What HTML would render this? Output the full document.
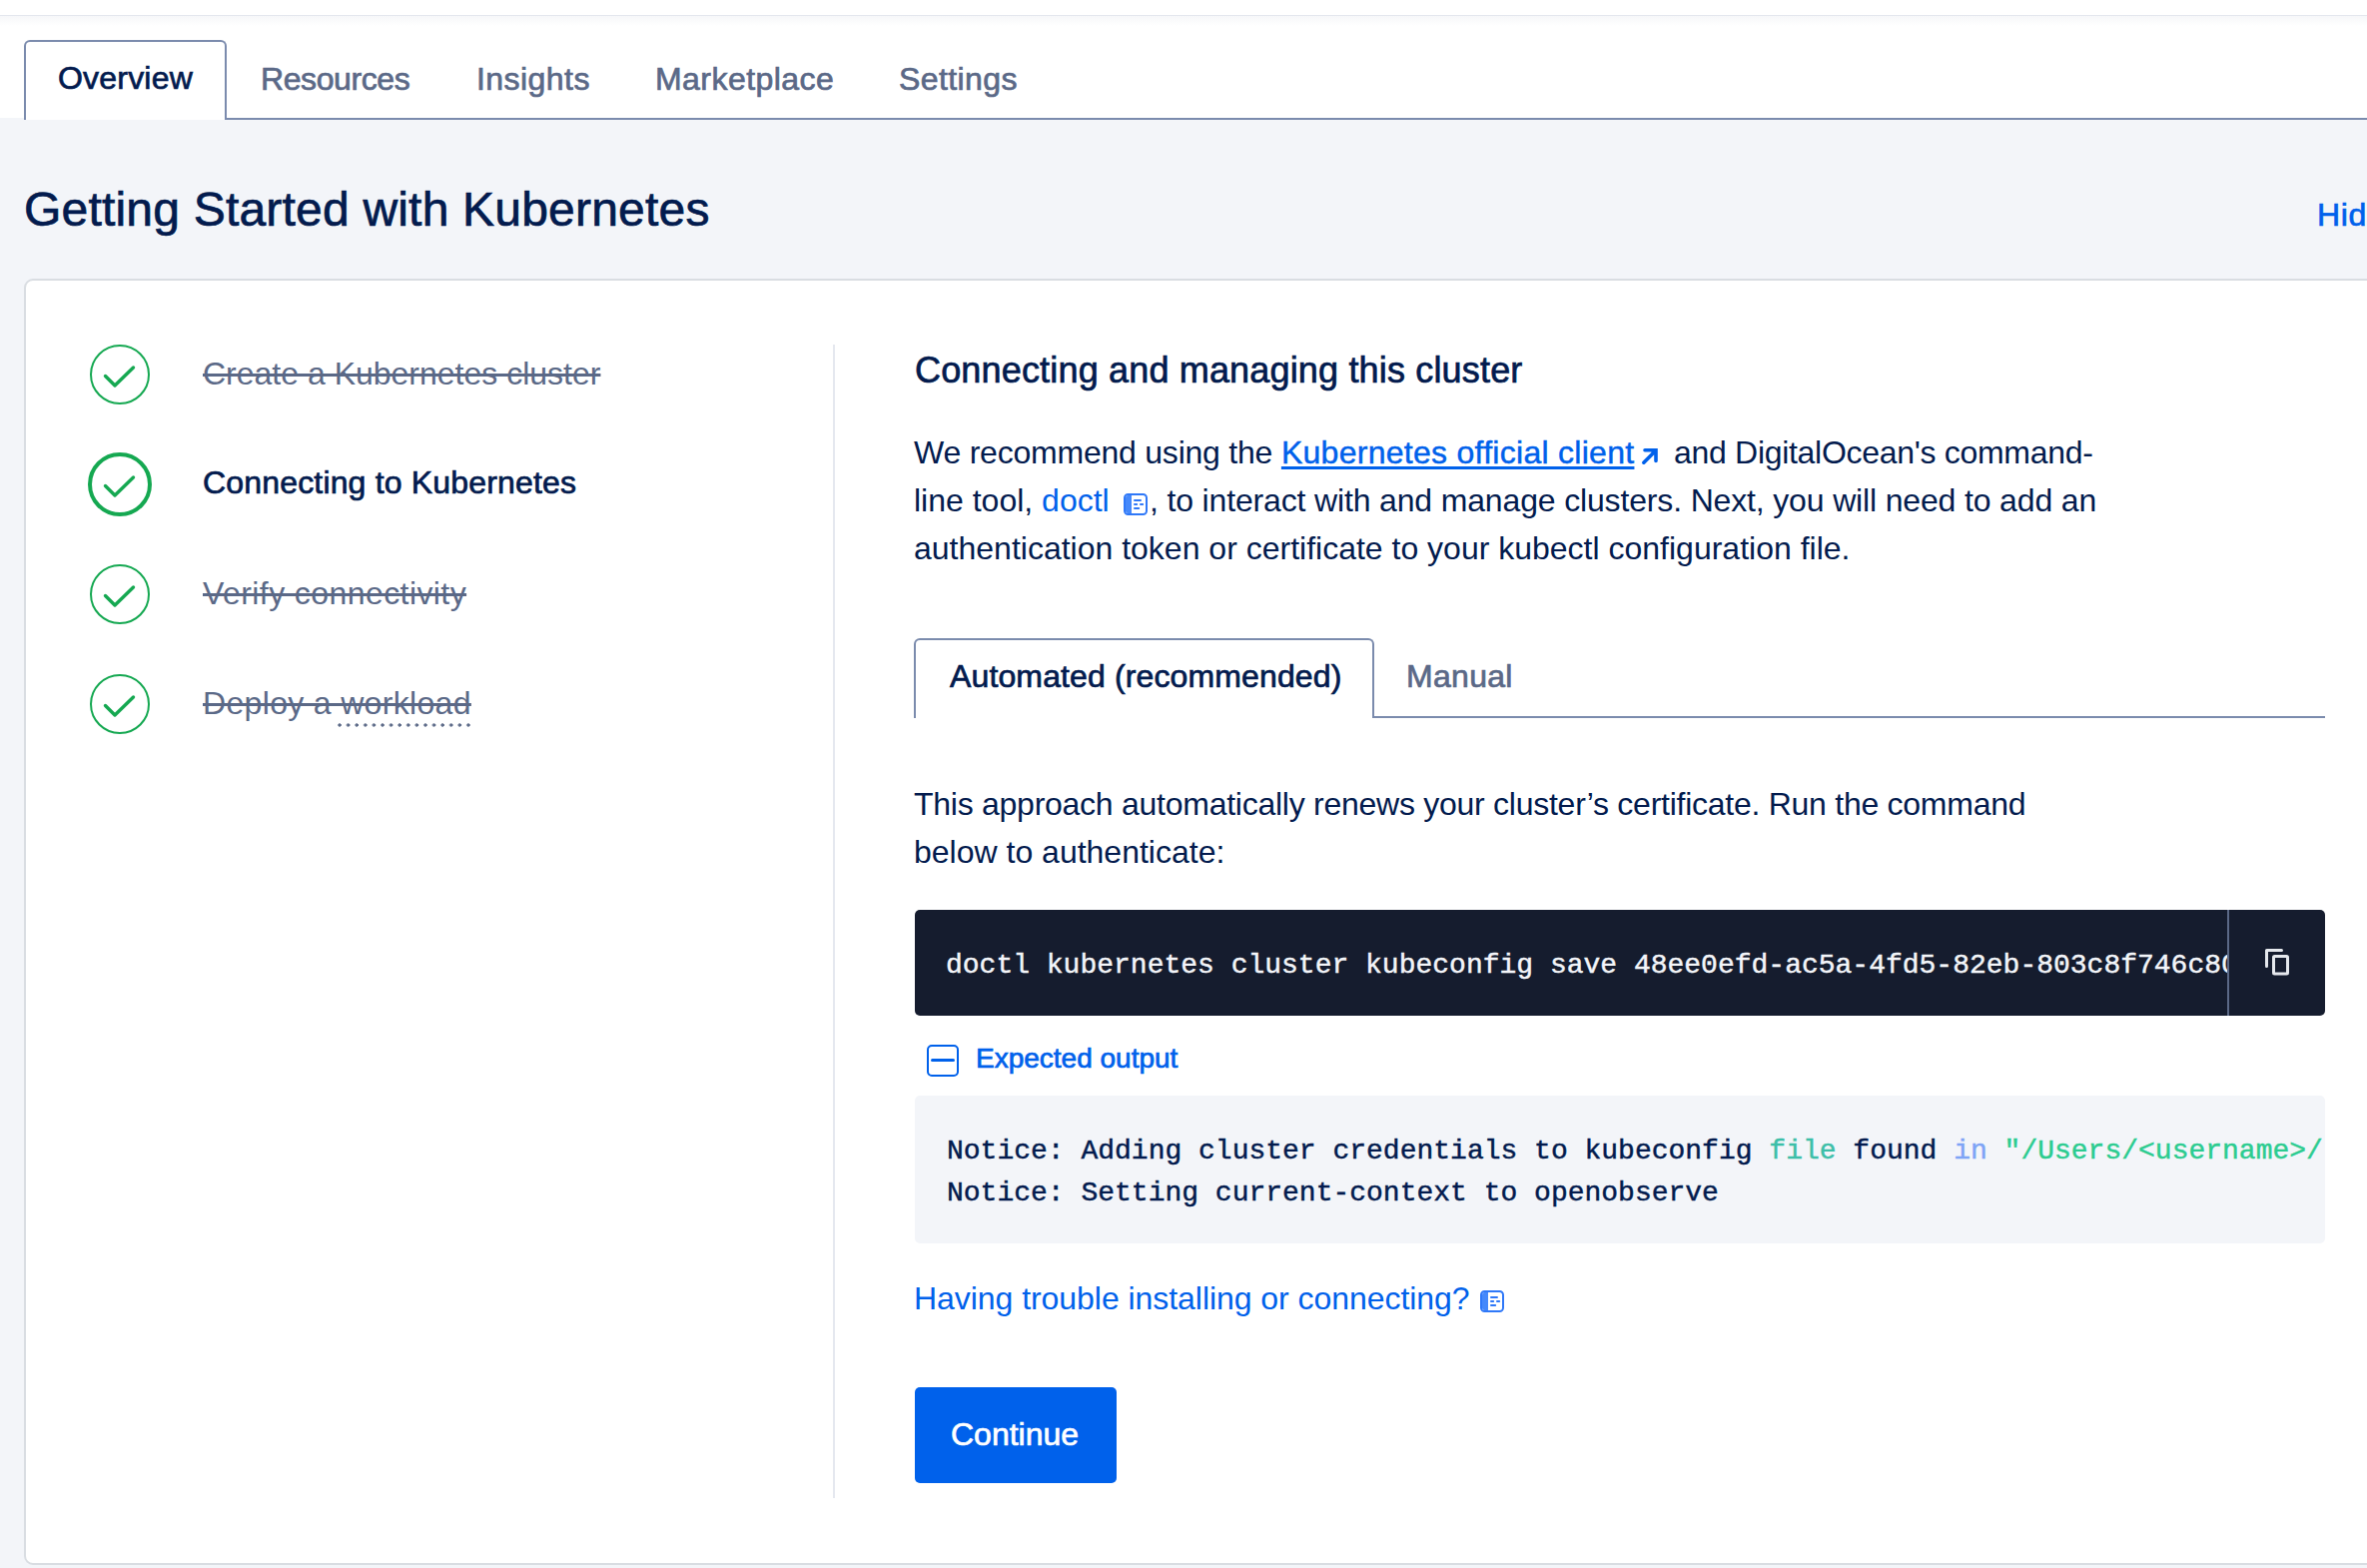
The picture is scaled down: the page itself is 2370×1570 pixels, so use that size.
<!DOCTYPE html>
<html>
<head>
<meta charset="utf-8">
<style>
html,body{margin:0;padding:0;}
body{width:2370px;height:1570px;position:relative;overflow:hidden;background:#f3f5f9;font-family:"Liberation Sans",sans-serif;color:#031b4e;}
.a{position:absolute;white-space:nowrap;line-height:1;}
.t32{font-size:32px;}
.sb{-webkit-text-stroke:0.7px currentColor;}
.gray{color:#5b6987;}
.blue{color:#0061eb;}
.mono{font-family:"Liberation Mono",monospace;font-size:28px;-webkit-text-stroke:0.45px currentColor;}
</style>
</head>
<body>
<!-- header white -->
<div class="a" style="left:0;top:0;width:2370px;height:118px;background:#fff;"></div>
<div class="a" style="left:0;top:15px;width:2370px;height:1px;background:#e4e7ee;"></div>
<div class="a" style="left:0;top:16px;width:2370px;height:10px;background:linear-gradient(#f6f7f9,#fff);"></div>
<!-- tab bar bottom line -->
<div class="a" style="left:224px;top:118px;width:2146px;height:2px;background:#7b8bad;"></div>
<!-- active tab -->
<div class="a" style="left:24px;top:40px;width:199px;height:78px;border:2px solid #7b8bad;border-bottom:none;border-radius:6px 6px 0 0;background:#fff;"></div>

<div class="a t32 sb" style="left:58px;top:62px;letter-spacing:0.2px;">Overview</div>
<div class="a t32 sb gray" style="left:261px;top:63px;letter-spacing:-0.4px;">Resources</div>
<div class="a t32 sb gray" style="left:477px;top:63px;letter-spacing:0.45px;">Insights</div>
<div class="a t32 sb gray" style="left:656px;top:63px;letter-spacing:0.45px;">Marketplace</div>
<div class="a t32 sb gray" style="left:900px;top:63px;letter-spacing:0.4px;">Settings</div>

<!-- heading -->
<div class="a sb" style="left:24px;top:186px;font-size:48px;letter-spacing:0.2px;">Getting Started with Kubernetes</div>
<div class="a t32 sb blue" style="left:2320px;top:199px;letter-spacing:0.6px;">Hid</div>

<!-- card -->
<div class="a" style="left:24px;top:279px;width:2400px;height:1284px;border:2px solid #d9dde2;border-radius:9px;background:#fff;"></div>


<!-- steps -->
<svg class="a" style="left:0;top:0;" width="840" height="800" viewBox="0 0 840 800">
  <g fill="none" stroke="#15a851" stroke-linecap="round" stroke-linejoin="round">
    <circle cx="120" cy="375" r="29" stroke-width="2"/>
    <circle cx="120" cy="485" r="30" stroke-width="4"/>
    <circle cx="120" cy="595" r="29" stroke-width="2"/>
    <circle cx="120" cy="705" r="29" stroke-width="2"/>
    <path d="M105.5 376.5 L115 386 L133.5 368" stroke-width="3.4"/>
    <path d="M105.5 486.5 L115 496 L133.5 478" stroke-width="3.4"/>
    <path d="M105.5 596.5 L115 606 L133.5 588" stroke-width="3.4"/>
    <path d="M105.5 706.5 L115 716 L133.5 698" stroke-width="3.4"/>
  </g>
</svg>
<div class="a t32 gray" style="left:203px;top:358px;text-decoration:line-through;text-decoration-thickness:2.6px;">Create a Kubernetes cluster</div>
<div class="a t32 sb" style="left:203px;top:467px;letter-spacing:0.17px;">Connecting to Kubernetes</div>
<div class="a t32 gray" style="left:203px;top:578px;text-decoration:line-through;text-decoration-thickness:2.6px;letter-spacing:0.42px;">Verify connectivity</div>
<div class="a t32 gray" style="left:203px;top:688px;text-decoration:line-through;text-decoration-thickness:2.6px;letter-spacing:0.33px;">Deploy a workload</div>
<div class="a" style="left:338px;top:724px;width:134px;height:4px;background:radial-gradient(circle at 2px 2px,#5b6987 1.4px,transparent 1.9px) 0 0/8.6px 4px repeat-x;"></div>

<!-- divider -->
<div class="a" style="left:834px;top:345px;width:2px;height:1155px;background:#e5e8ef;"></div>

<!-- right column -->
<div class="a sb" style="left:916px;top:353px;font-size:36px;letter-spacing:0.17px;">Connecting and managing this cluster</div>
<div class="a t32" style="left:915px;top:437px;"><span style="letter-spacing:-0.22px">We recommend using the </span><span class="blue" style="letter-spacing:0.28px;-webkit-text-stroke:0.45px currentColor;text-decoration:underline;text-decoration-thickness:2.6px;text-underline-offset:3px;">Kubernetes official client</span></div>
<div class="a t32" style="left:1676px;top:437px;letter-spacing:-0.3px;">and DigitalOcean's command-</div>
<div class="a t32" style="left:915px;top:485px;">line tool, <span class="blue">doctl</span></div>
<div class="a t32" style="left:1151px;top:485px;letter-spacing:-0.155px;">, to interact with and manage clusters. Next, you will need to add an</div>
<div class="a t32" style="left:915px;top:533px;">authentication token or certificate to your kubectl configuration file.</div>

<!-- tabs -->
<div class="a" style="left:1374px;top:717px;width:954px;height:2px;background:#7b8bad;"></div>
<div class="a" style="left:915px;top:639px;width:457px;height:78px;border:2px solid #7b8bad;border-bottom:none;border-radius:6px 6px 0 0;background:#fff;"></div>
<div class="a t32 sb" style="left:951px;top:661px;letter-spacing:0.13px;">Automated (recommended)</div>
<div class="a t32 sb gray" style="left:1408px;top:661px;letter-spacing:0.3px;">Manual</div>

<div class="a t32" style="left:915px;top:789px;letter-spacing:-0.26px;">This approach automatically renews your cluster’s certificate. Run the command</div>
<div class="a t32" style="left:915px;top:837px;">below to authenticate:</div>

<!-- code block -->
<div class="a" style="left:916px;top:911px;width:1412px;height:106px;background:#151c2e;border-radius:5px;"></div>
<div class="a" style="left:947px;top:911px;width:1283px;height:106px;overflow:hidden;">
  <div class="a mono" style="left:0;top:42px;color:#f3f5f9;">doctl kubernetes cluster kubeconfig save 48ee0efd-ac5a-4fd5-82eb-803c8f746c80</div>
</div>
<div class="a" style="left:2230px;top:911px;width:2px;height:106px;background:#5b6987;"></div>

<!-- expected output -->
<div class="a" style="left:928px;top:1046px;width:28px;height:28px;border:2px solid #0061eb;border-radius:5px;"></div>
<div class="a" style="left:932px;top:1060px;width:24px;height:3px;background:#0061eb;border-radius:1.5px;"></div>
<div class="a sb blue" style="left:977px;top:1046px;font-size:28px;">Expected output</div>

<div class="a" style="left:916px;top:1097px;width:1412px;height:148px;background:#f3f5f9;border-radius:5px;overflow:hidden;">
  <div class="a mono" style="left:32px;top:42px;">Notice: Adding cluster credentials to kubeconfig <span style="color:#3cbfa8">file</span> found <span style="color:#7ea4f6">in</span> <span style="color:#2ccc90">"/Users/&lt;username&gt;/.kube/config"</span></div>
  <div class="a mono" style="left:32px;top:84px;">Notice: Setting current-context to openobserve</div>
</div>

<div class="a t32 blue" style="left:915px;top:1284px;letter-spacing:-0.05px;">Having trouble installing or connecting?</div>

<!-- button -->
<div class="a" style="left:916px;top:1389px;width:202px;height:96px;background:#0061eb;border-radius:5px;"></div>
<div class="a t32 sb" style="left:952px;top:1420px;color:#fff;">Continue</div>


<!-- icons -->
<svg class="a" style="left:1640px;top:445px;" width="24" height="24" viewBox="1640 445 24 24">
  <path d="M1645.8 463.2 L1657 452" stroke="#0061eb" stroke-width="3.6" stroke-linecap="round" fill="none"/>
  <path d="M1647 450.8 H1658 V461.5" stroke="#0061eb" stroke-width="3.6" stroke-linecap="round" stroke-linejoin="miter" fill="none"/>
  <path d="M1652 451 L1658 451 L1658 457 Z" fill="#0061eb"/>
</svg>
<svg class="a" style="left:1124px;top:493px;" width="26" height="24" viewBox="0 0 26 24">
  <rect x="2" y="2" width="22" height="20" rx="3.5" fill="#fff" stroke="#2f78f8" stroke-width="2"/>
  <path d="M3 5.5 Q3 3 5.5 3 L9 3 L9 21 L5.5 21 Q3 21 3 18.5 Z" fill="#4589fb"/>
  <path d="M12 8 H18 M12 12 H14.2 M18 12 H20.2 M12 16 H16.2" stroke="#2f78f8" stroke-width="2" stroke-linecap="round"/>
</svg>
<svg class="a" style="left:1481px;top:1291px;" width="26" height="24" viewBox="0 0 26 24">
  <rect x="2" y="2" width="22" height="20" rx="3.5" fill="#fff" stroke="#2f78f8" stroke-width="2"/>
  <path d="M3 5.5 Q3 3 5.5 3 L9 3 L9 21 L5.5 21 Q3 21 3 18.5 Z" fill="#4589fb"/>
  <path d="M12 8 H18 M12 12 H14.2 M18 12 H20.2 M12 16 H16.2" stroke="#2f78f8" stroke-width="2" stroke-linecap="round"/>
</svg>
<svg class="a" style="left:2260px;top:944px;" width="40" height="40" viewBox="2260 944 40 40">
  <path d="M2269.5 967.5 V951.5 H2284.5" stroke="#e5e8ed" stroke-width="3" fill="none" stroke-linecap="round" stroke-linejoin="round"/>
  <rect x="2276.5" y="957.5" width="14" height="17.5" rx="1" stroke="#e5e8ed" stroke-width="3" fill="none"/>
</svg>

</body>
</html>
